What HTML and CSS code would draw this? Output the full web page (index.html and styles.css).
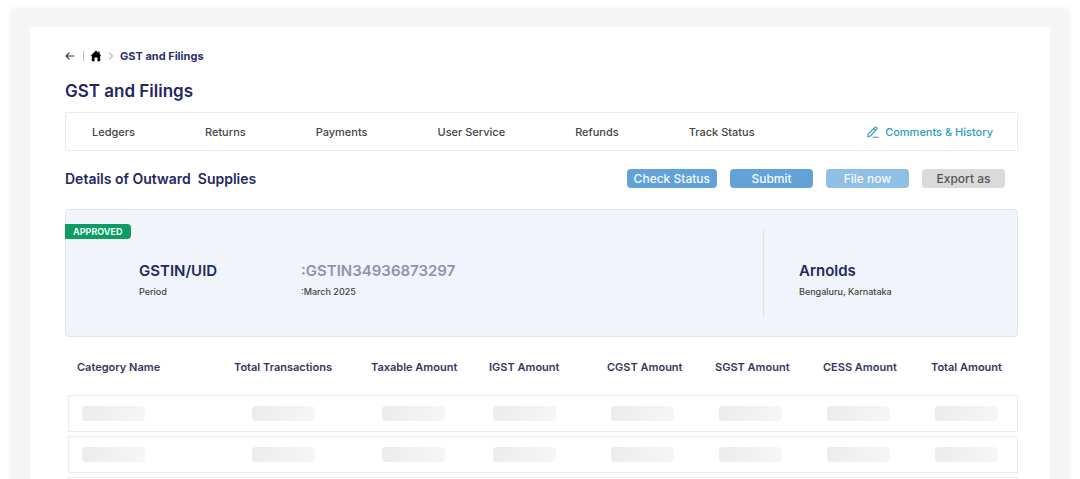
FILE: index.html
```
<!DOCTYPE html>
<html lang="en">
	<head>
		<meta charset="UTF-8">
		<title>GST and Filings</title>
		<link rel="stylesheet" href="styles.css">
	</head>
	<body>
		<div class="frame">
			<main class="panel">
				<div class="breadcrumb">
					<a class="back" href="#" aria-label="Back">
						<svg width="10" height="10" viewBox="0 0 10 10"><path d="M9.2 5H1.2M4.4 1.6L1 5l3.4 3.4" fill="none" stroke="#333" stroke-width="1.2"/></svg>
					</a>
					<span class="bar"></span>
					<a class="home" href="#" aria-label="Home">
						<svg width="12" height="12" viewBox="0 0 12 12"><path d="M6 .6L.6 5.8h1.2v5.4h2.8V7.6h2.8v3.6h2.8V5.8h1.2L9.6 3.9V1.4H8.3v1.3z" fill="#000"/></svg>
					</a>
					<svg class="chevron" width="6" height="8" viewBox="0 0 6 8"><path d="M1.2.8L4.6 4 1.2 7.2" fill="none" stroke="#bbb" stroke-width="1.2"/></svg>
					<a class="current" href="#">GST and Filings</a>
				</div>
				<h1>GST and Filings</h1>
				<nav class="tabs">
					<a href="#">Ledgers</a>
					<a href="#">Returns</a>
					<a href="#">Payments</a>
					<a href="#">User Service</a>
					<a href="#">Refunds</a>
					<a href="#">Track Status</a>
					<a class="comments" href="#">
						<svg width="12" height="12" viewBox="0 0 12 12"><path d="M1.2 8.2L7.8 1.4a1.3 1.3 0 0 1 2 1.8L3.4 10l-2.6.8zM6.6 2.8l1.8 1.7M6 11.2h5.2" fill="none" stroke="#2a9dbf" stroke-width="1.1" stroke-linejoin="round" stroke-linecap="round"/></svg>
						Comments &amp; History
					</a>
				</nav>
				<div class="toolbar">
					<h2>Details of Outward&nbsp; Supplies</h2>
					<div class="buttons">
						<button type="button">Check Status</button>
						<button type="button">Submit</button>
						<button type="button" class="light">File now</button>
						<button type="button" class="grey">Export as</button>
					</div>
				</div>
				<section class="card">
					<span class="badge">APPROVED</span>
					<div>
						<p class="big">GSTIN/UID</p>
						<p class="small">Period</p>
					</div>
					<div>
						<p class="big muted">:GSTIN34936873297</p>
						<p class="small">:March 2025</p>
					</div>
					<div class="company">
						<p class="big">Arnolds</p>
						<p class="small">Bengaluru, Karnataka</p>
					</div>
				</section>
				<table>
					<colgroup>
						<col class="w-category"><col class="w-trans"><col class="w-medium"><col class="w-medium">
						<col class="w-narrow"><col class="w-narrow"><col class="w-narrow"><col>
					</colgroup>
					<thead>
						<tr>
							<th>Category Name</th>
							<th>Total Transactions</th>
							<th>Taxable Amount</th>
							<th>IGST Amount</th>
							<th>CGST Amount</th>
							<th>SGST Amount</th>
							<th>CESS Amount</th>
							<th>Total Amount</th>
						</tr>
					</thead>
					<tbody>
						<tr>
							<td><span class="skeleton"></span></td>
							<td class="trans"><span class="skeleton"></span></td>
							<td class="taxable"><span class="skeleton"></span></td>
							<td><span class="skeleton"></span></td>
							<td><span class="skeleton"></span></td>
							<td><span class="skeleton"></span></td>
							<td><span class="skeleton"></span></td>
							<td><span class="skeleton"></span></td>
						</tr>
						<tr>
							<td><span class="skeleton"></span></td>
							<td class="trans"><span class="skeleton"></span></td>
							<td class="taxable"><span class="skeleton"></span></td>
							<td><span class="skeleton"></span></td>
							<td><span class="skeleton"></span></td>
							<td><span class="skeleton"></span></td>
							<td><span class="skeleton"></span></td>
							<td><span class="skeleton"></span></td>
						</tr>
						<tr>
							<td><span class="skeleton"></span></td>
							<td class="trans"><span class="skeleton"></span></td>
							<td class="taxable"><span class="skeleton"></span></td>
							<td><span class="skeleton"></span></td>
							<td><span class="skeleton"></span></td>
							<td><span class="skeleton"></span></td>
							<td><span class="skeleton"></span></td>
							<td><span class="skeleton"></span></td>
						</tr>
					</tbody>
				</table>
			</main>
		</div>
	</body>
</html>
```

FILE: styles.css
```
*{
	margin: 0;
	padding: 0;
	box-sizing: border-box;
}
html{
	height: 100%;
	overflow: hidden;
}
body{
	height: 100%;
	overflow: hidden;
	background: #fff;
	font-family: Inter, "Liberation Sans", sans-serif;
	font-size: 11px;
	color: #444;
}
a{
	color: inherit;
	text-decoration: none;
}
svg{
	display: block;
}
.frame{
	margin: 9px 12px 0;
	padding: 18px 18px 0;
	background: #f5f5f5;
	box-shadow: 0 0 6px rgba(0,0,0,.08);
}
.panel{
	background: #fff;
	padding: 20px 32px 0 35px;
}
.breadcrumb{
	display: flex;
	align-items: center;
	height: 18px;
}
.breadcrumb .bar{
	width: 1px;
	height: 10px;
	margin: 0 6px 0 8px;
	background: #bbb;
}
.breadcrumb .chevron{
	margin: 0 6px;
}
.breadcrumb .current{
	font-weight: 700;
	color: #2b2f6b;
}
h1{
	margin-top: 14px;
	font-size: 17px;
	line-height: 24px;
	font-weight: 600;
	color: #24285f;
}
.tabs{
	display: flex;
	align-items: center;
	gap: 70px;
	height: 39px;
	margin-top: 9px;
	padding: 0 24px 0 26px;
	border: 1px solid #ededed;
	white-space: nowrap;
	font-weight: 500;
}
.tabs .comments{
	display: flex;
	align-items: center;
	gap: 6px;
	margin-left: auto;
	color: #2a9dbf;
}
.toolbar{
	display: flex;
	align-items: center;
	justify-content: space-between;
	height: 20px;
	margin-top: 17px;
	padding-right: 13px;
}
h2{
	font-size: 14px;
	font-weight: 600;
	color: #24285f;
}
.buttons{
	display: flex;
	gap: 13px;
}
button{
	min-width: 83px;
	height: 19px;
	padding: 0 7px;
	border: 0;
	border-radius: 4px;
	background: #62a2d8;
	color: #f4faff;
	font-family: inherit;
	font-size: 12px;
	font-weight: 500;
}
button.light{
	background: #8fc0e4;
}
button.grey{
	background: #dadada;
	color: #555;
}
.card{
	display: grid;
	grid-template-columns: 162px 1fr 254px;
	align-items: center;
	position: relative;
	margin-top: 21px;
	padding: 19px 0 19px 73px;
	background: #f2f4fb;
	border: 1px solid #e2e4ea;
	border-radius: 4px;
}
.badge{
	position: absolute;
	left: -1px;
	top: 14px;
	padding: 0 8px;
	border-radius: 0 4px 4px 0;
	background: #0f9b64;
	color: #e4fff2;
	font-size: 9px;
	line-height: 15px;
	font-weight: 700;
}
.big{
	font-size: 15px;
	line-height: 22px;
	font-weight: 600;
	color: #24285f;
}
.muted{
	color: #8f93ae;
}
.small{
	font-size: 9px;
	line-height: 20px;
	font-weight: 500;
}
.card > div{
	padding-top: 31px;
	padding-bottom: 15px;
}
.card .company{
	padding-left: 35px;
	border-left: 1px solid #dfe1ea;
}
table{
	width: calc(100% - 3px);
	margin: 12px 0 0 3px;
	table-layout: fixed;
	border-collapse: separate;
	border-spacing: 0 4px;
}
.w-category{
	width: 157px;
}
.w-trans{
	width: 137px;
}
.w-medium{
	width: 118px;
}
.w-narrow{
	width: 108px;
}
th{
	height: 38px;
	padding: 0 0 11px 9px;
	text-align: left;
	white-space: nowrap;
	font-weight: 600;
	color: #34385f;
}
td{
	height: 37px;
	padding-left: 13px;
	border: 1px solid #ececec;
	border-width: 1px 0;
}
td:first-child{
	border-left-width: 1px;
}
td:last-child{
	border-right-width: 1px;
}
.trans{
	padding-left: 27px;
}
.taxable{
	padding-left: 20px;
}
.skeleton{
	display: block;
	width: 63px;
	height: 15px;
	border-radius: 4px;
	background: linear-gradient(90deg, #ececec, #f6f6f6);
}
```
